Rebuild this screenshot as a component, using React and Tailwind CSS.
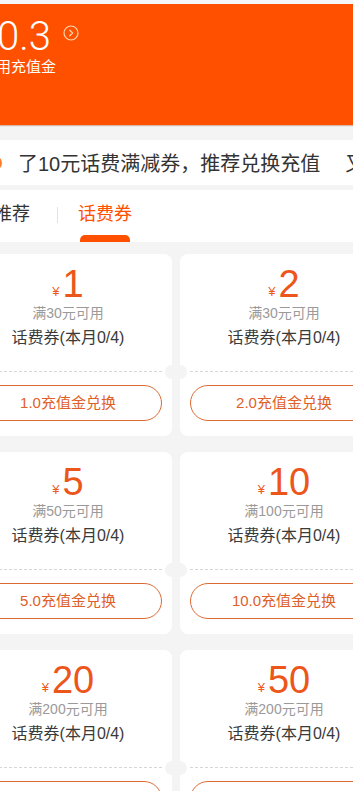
import React from "react";

const coupons = [
  { v: "1", min: "30", btn: "1.0" },
  { v: "2", min: "30", btn: "2.0" },
  { v: "5", min: "50", btn: "5.0" },
  { v: "10", min: "100", btn: "10.0" },
  { v: "20", min: "200", btn: "20.0" },
  { v: "50", min: "200", btn: "50.0" },
];

const FONT = { fontFamily: '"Liberation Sans", "Noto Sans CJK SC", sans-serif' };

function Card({ c }) {
  return (
    <div className="relative h-[182px] rounded-[8px] bg-white">
      <div className="mx-[10px] h-[118px] border-b border-dashed border-[#d6d6d6] pt-[11px] flex flex-col items-center">
        <div className="flex items-end h-[38px] leading-none">
          <span className="text-[13px] text-[#ee5a1e] mr-[3px] mb-[5px]">¥</span>
          <span className="text-[38px] leading-none text-[#ec561b]">{c.v}</span>
        </div>
        <div className="text-[14px] leading-[20px] text-[#9a9a9a]">满{c.min}元可用</div>
        <div className="mt-[4px] text-[16px] leading-[22px] text-[#3a3a3a]">话费券(本月0/4)</div>
      </div>
      <div className="absolute left-[-7px] top-[111px] h-[14px] w-[14px] rounded-full bg-[#f4f4f4]" />
      <div className="absolute right-[-7px] top-[111px] h-[14px] w-[14px] rounded-full bg-[#f4f4f4]" />
      <div className="mx-[10px] mt-[13px] flex h-[36px] items-center justify-center rounded-full border border-[#dc6a34] text-[15px] text-[#e0602a]">
        {c.btn}充值金兑换
      </div>
    </div>
  );
}

export default function App() {
  return (
    <div className="w-[353px] h-[791px] overflow-hidden bg-[#f4f4f4]" style={FONT}>
      <div className="h-[4px] bg-[#f6f6f6]" />
      <div className="h-[121px] bg-[#ff5000] pt-[13px] shadow-[0_1px_1px_rgba(150,40,0,0.3)]">
        <div className="flex items-start ml-[-3px]">
          <span
            className="text-[40px] leading-none text-white font-light"
            style={{ fontFamily: 'Roboto, "Liberation Sans", sans-serif' }}
          >
            0.3
          </span>
          <svg className="ml-[12px] mt-[8px]" width="16" height="16" viewBox="0 0 16 16" fill="none">
            <circle cx="8" cy="8" r="7" stroke="#ffd7a8" strokeWidth="1.2" />
            <path d="M6.8 5.2 L9.6 8 L6.8 10.8" stroke="#ffd7a8" strokeWidth="1.3" strokeLinecap="round" strokeLinejoin="round" />
          </svg>
        </div>
        <div className="ml-[-4px] text-[15px] leading-[20px] text-white">用充值金</div>
      </div>
      <div className="mt-[15px] h-[45px] bg-white flex items-center whitespace-nowrap overflow-hidden">
        <svg className="ml-[-13px] shrink-0" width="16" height="16" viewBox="0 0 16 16">
          <circle cx="8" cy="8" r="7" fill="#ff7a2a" />
        </svg>
        <span className="ml-[15px] text-[20px] leading-[26px] text-[#333] pt-[3px]">了10元话费满减券，推荐兑换充值</span>
        <span className="ml-[25px] text-[20px] leading-[26px] text-[#333] pt-[3px]">又</span>
      </div>
      <div className="mt-[5px] h-[52px] bg-white flex items-start">
        <div className="ml-[-6px] mt-[11px] text-[18px] leading-[26px] text-[#333]">推荐</div>
        <div className="ml-[27px] mt-[17px] h-[16px] w-px bg-[#e2e2e2]" />
        <div className="ml-[20px] flex flex-col items-center">
          <div className="mt-[11px] text-[18px] leading-[26px] text-[#ff5000]">话费券</div>
          <div className="mt-[8px] h-[7px] w-[50px] rounded-t-[5px] bg-[#ff5000]" />
        </div>
      </div>
      <div className="mt-[12px] ml-[-36px] grid grid-cols-[208px_208px] gap-x-[8px] gap-y-[16px]">
        {coupons.map((c, i) => (
          <Card key={i} c={c} />
        ))}
      </div>
    </div>
  );
}
